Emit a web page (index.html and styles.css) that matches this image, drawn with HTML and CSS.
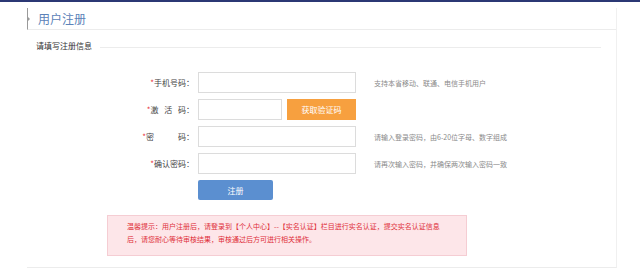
FILE: index.html
```html
<!DOCTYPE html>
<html lang="zh-CN">
<head>
  <meta charset="UTF-8">
  <meta name="viewport" content="width=device-width, initial-scale=1.0">
  <title>用户注册</title>
  <link rel="stylesheet" href="styles.css">
</head>
<body>
  <div class="topbar"></div>
  <div class="panel">
    <div class="panel-head">用户注册</div>
    <div class="section-title">请填写注册信息</div>

    <form class="reg-form" onsubmit="return false;">
      <div class="row">
        <label class="label"><em>*</em>手机号码：</label>
        <input type="text" class="input">
        <span class="hint">支持本省移动、联通、电信手机用户</span>
      </div>
      <div class="row">
        <label class="label"><em>*</em>激&ensp;&nbsp;活&ensp;&nbsp;码：</label>
        <input type="text" class="input input-short">
        <button type="button" class="btn-code">获取验证码</button>
      </div>
      <div class="row">
        <label class="label"><em>*</em>密　　　码：</label>
        <input type="password" class="input">
        <span class="hint">请输入登录密码，由6-20位字母、数字组成</span>
      </div>
      <div class="row">
        <label class="label"><em>*</em>确认密码：</label>
        <input type="password" class="input">
        <span class="hint">请再次输入密码，并确保两次输入密码一致</span>
      </div>
      <div class="row-btn">
        <button type="submit" class="btn-submit">注册</button>
      </div>
    </form>

    <div class="notice">
      温馨提示：用户注册后，请登录到【个人中心】--【实名认证】栏目进行实名认证，提交实名认证信息<br>后，请您耐心等待审核结果，审核通过后方可进行相关操作。
    </div>
  </div>
</body>
</html>
```

FILE: styles.css
```css
body {
  margin: 0;
  background: #fff;
  font-family: "Noto Sans CJK SC", "Liberation Sans", sans-serif;
  color: #333;
}
.topbar {
  height: 2px;
  background-color: #2b3874;
}
.panel {
  margin: 6px 0 0 27px;
  width: 589px;
  border-right: 1px solid #f0f0f0;
  border-bottom: 1px solid #ececec;
  padding-bottom: 11px;
}
.panel-head {
  position: relative;
  height: 21px;
  line-height: 21px;
  padding-left: 10px;
  border-left: 1px solid #9a9a9a;
  border-bottom: 1px solid #ececec;
  font-size: 12px;
  color: #5b82b8;
}
.panel-head::before {
  content: "";
  position: absolute;
  left: 0;
  top: 9px;
  border-top: 2px solid transparent;
  border-bottom: 2px solid transparent;
  border-left: 2px solid #9a9a9a;
}
.section-title {
  display: flex;
  align-items: center;
  margin: 10px 15px 0 9px;
  font-size: 8px;
  line-height: 12px;
  color: #333;
}
.section-title::after {
  content: "";
  flex: 1;
  margin-left: 8px;
  margin-top: 3px;
  border-top: 1px solid #ececec;
}
.reg-form {
  margin-top: 20px;
}
.row {
  display: flex;
  align-items: center;
  height: 21px;
  margin-bottom: 6px;
}
.label {
  width: 167px;
  padding-right: 4px;
  text-align: right;
  font-size: 8px;
  color: #444;
  white-space: nowrap;
}
.label em {
  font-style: normal;
  color: #e8343c;
}
.input {
  box-sizing: border-box;
  width: 158px;
  height: 21px;
  margin: 0;
  border: 1px solid #dcdcdc;
  background: #fff;
  padding: 0 4px;
  font-size: 8px;
}
.input-short {
  width: 84px;
}
.btn-code {
  width: 69px;
  height: 21px;
  margin-left: 5px;
  border: none;
  background-color: #f7a03f;
  color: #fff;
  font-family: inherit;
  font-size: 8px;
  padding: 0;
}
.hint {
  margin-left: 18px;
  font-size: 7px;
  color: #8a8a8a;
}
.row-btn {
  display: flex;
  padding-left: 171px;
  margin-top: 2px;
}
.btn-submit {
  width: 75px;
  height: 20px;
  border: none;
  border-radius: 2px;
  background-color: #5b8fd0;
  color: #fff;
  font-family: inherit;
  font-size: 8px;
  padding: 0;
}
.notice {
  width: 321px;
  margin: 15px 0 0 80px;
  padding: 4px 18px 9px 19px;
  background-color: #fde6e9;
  border: 1px solid #f5cdd3;
  font-size: 7px;
  line-height: 13px;
  color: #e0303a;
  white-space: nowrap;
}
```
